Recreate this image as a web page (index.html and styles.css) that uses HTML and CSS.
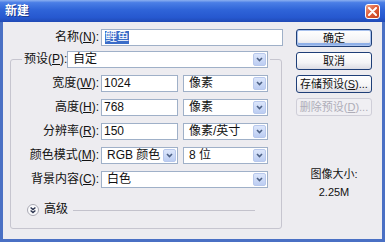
FILE: index.html
```html
<!DOCTYPE html>
<html lang="zh-CN">
<head>
  <meta charset="UTF-8" />
  <title>新建</title>
  <link rel="stylesheet" href="styles.css">
</head>
<body>
  <div class="window">
    <div class="titlebar">
      <span class="title">新建</span>
      <span class="close">
        <svg width="9" height="9" viewBox="0 0 9 9"><path d="M1 1L8 8M8 1L1 8" stroke="#fff" stroke-width="2" stroke-linecap="round"/></svg>
      </span>
    </div>
    <div class="body">
      <div class="main">
        <div class="row name-row">
          <label class="lbl">名称(<u>N</u>):</label>
          <div class="field name-field"><span class="sel">鲤鱼</span></div>
        </div>
        <fieldset class="group">
          <legend class="preset">
            <label class="preset-lbl">预设(<u>P</u>):</label>
            <div class="field select preset-select">自定<span class="arrow"><svg width="7" height="5" viewBox="0 0 7 5"><path d="M1 1L3.5 3.5L6 1" stroke="#4d6185" stroke-width="1.6" fill="none"/></svg></span></div>
          </legend>
          <div class="row">
            <label class="lbl">宽度(<u>W</u>):</label>
            <div class="field num">1024</div>
            <div class="field select unit">像素<span class="arrow"><svg width="7" height="5" viewBox="0 0 7 5"><path d="M1 1L3.5 3.5L6 1" stroke="#4d6185" stroke-width="1.6" fill="none"/></svg></span></div>
          </div>
          <div class="row">
            <label class="lbl">高度(<u>H</u>):</label>
            <div class="field num">768</div>
            <div class="field select unit">像素<span class="arrow"><svg width="7" height="5" viewBox="0 0 7 5"><path d="M1 1L3.5 3.5L6 1" stroke="#4d6185" stroke-width="1.6" fill="none"/></svg></span></div>
          </div>
          <div class="row">
            <label class="lbl">分辨率(<u>R</u>):</label>
            <div class="field num">150</div>
            <div class="field select unit">像素/英寸<span class="arrow"><svg width="7" height="5" viewBox="0 0 7 5"><path d="M1 1L3.5 3.5L6 1" stroke="#4d6185" stroke-width="1.6" fill="none"/></svg></span></div>
          </div>
          <div class="row">
            <label class="lbl">颜色模式(<u>M</u>):</label>
            <div class="field select num">RGB 颜色<span class="arrow"><svg width="7" height="5" viewBox="0 0 7 5"><path d="M1 1L3.5 3.5L6 1" stroke="#4d6185" stroke-width="1.6" fill="none"/></svg></span></div>
            <div class="field select unit">8 位<span class="arrow"><svg width="7" height="5" viewBox="0 0 7 5"><path d="M1 1L3.5 3.5L6 1" stroke="#4d6185" stroke-width="1.6" fill="none"/></svg></span></div>
          </div>
          <div class="row">
            <label class="lbl">背景内容(<u>C</u>):</label>
            <div class="field select full">白色<span class="arrow"><svg width="7" height="5" viewBox="0 0 7 5"><path d="M1 1L3.5 3.5L6 1" stroke="#4d6185" stroke-width="1.6" fill="none"/></svg></span></div>
          </div>
          <div class="advanced">
            <span class="toggle">
              <svg width="12" height="12" viewBox="0 0 12 12">
                <circle cx="6" cy="6" r="5.5" fill="#fafafc" stroke="#a9a9b3"/>
                <path d="M3.6 3.4L6 5.6L8.4 3.4M3.6 6.4L6 8.6L8.4 6.4" stroke="#2d3550" stroke-width="1.3" fill="none"/>
              </svg>
            </span>
            <span class="adv-text">高级</span>
            <span class="adv-line"></span>
          </div>
        </fieldset>
      </div>
      <div class="side">
        <div class="btn default">确定</div>
        <div class="btn">取消</div>
        <div class="btn">存储预设(<u>S</u>)...</div>
        <div class="btn disabled">删除预设(<u>D</u>)...</div>
        <div class="info">
          <div>图像大小:</div>
          <div class="size">2.25M</div>
        </div>
      </div>
    </div>
  </div>
</body>
</html>
```

FILE: styles.css
```css
*, *::before, *::after {
  box-sizing: border-box;
}

body {
  margin: 0;
  font-family: "Liberation Sans", "Noto Sans CJK SC", sans-serif;
  font-size: 12px;
  color: #111;
  background: #fff;
}

u {
  text-decoration: underline;
  text-underline-offset: 1px;
}

.window {
  width: 385px;
  height: 242px;
  display: flex;
  flex-direction: column;
  background: #4168c0;
}

/* Title bar */
.titlebar {
  height: 22px;
  flex: none;
  display: flex;
  align-items: center;
  justify-content: space-between;
  padding: 0 5px 0 5px;
  background: linear-gradient(to bottom, #8cb0f0 0%, #4a7ee6 12%, #2f64d8 45%, #2658cf 80%, #2049b5 100%);
}

.title {
  color: #fff;
  font-weight: bold;
  font-size: 12px;
  line-height: 14px;
  text-shadow: 1px 1px 0 #1b3a90;
}

.close {
  width: 15px;
  height: 15px;
  border: 1px solid #fff;
  border-radius: 3px;
  background: linear-gradient(135deg, #f0a58a 0%, #e0603c 45%, #c5401c 100%);
  display: flex;
  align-items: center;
  justify-content: center;
}

/* Dialog body */
.body {
  flex: 1;
  display: flex;
  background: #edecf0;
  border: 3px solid #4a70c4;
  border-top: 0;
}

.main {
  width: 280px;
  padding-top: 7px;
}

.row {
  display: flex;
  align-items: center;
  height: 17px;
  margin-top: 7px;
}

.name-row {
  margin-top: 0;
}

.lbl {
  width: 88px;
  margin-right: 2px;
  text-align: right;
  line-height: 15px;
  white-space: nowrap;
}

.name-row .lbl {
  width: 96px;
}

.field {
  height: 17px;
  border: 1px solid #9fb0c8;
  background: #fff;
  padding-left: 2px;
  display: flex;
  align-items: center;
  line-height: 15px;
  white-space: nowrap;
}

.field.select {
  padding-left: 5px;
}

.name-field {
  width: 182px;
  padding-left: 3px;
}

.sel {
  background: #3a6cc8;
  color: #fff;
  line-height: 13px;
}

.select .arrow {
  margin-left: auto;
  width: 13px;
  height: 13px;
  margin-right: 1px;
  border: 1px solid #b8c8ec;
  border-radius: 2px;
  background: linear-gradient(to bottom, #dce6fb, #bccdf2);
  display: flex;
  align-items: center;
  justify-content: center;
}

/* Group box */
.group {
  margin: 5px 0 0 7px;
  padding: 0 0 12px 0;
  width: 272px;
  min-width: 0;
  border: 1px solid #c6c5cf;
  border-radius: 3px;
}

.preset {
  display: flex;
  align-items: center;
  height: 17px;
  margin-left: 11px;
  padding: 0 2px;
}

.preset-lbl {
  width: 43px;
  line-height: 15px;
  white-space: nowrap;
}

.preset-select {
  width: 201px;
}

.group .row:first-of-type {
  margin-top: 7px;
}

.num {
  width: 77px;
}

.unit {
  width: 85px;
  margin-left: 5px;
}

.full {
  width: 167px;
}

.advanced {
  display: flex;
  align-items: center;
  height: 13px;
  margin-top: 15px;
  padding-left: 16px;
}

.toggle {
  display: flex;
}

.adv-text {
  margin-left: 5px;
  line-height: 13px;
}

.adv-line {
  flex: 1;
  height: 1px;
  margin: 1px 26px 0 5px;
  background: #c3c2cc;
}

/* Side buttons */
.side {
  flex: 1;
  padding: 7px 0 0 13px;
  display: flex;
  flex-direction: column;
}

.btn {
  width: 76px;
  height: 18px;
  margin-bottom: 5px;
  border: 1px solid #1f3f78;
  border-radius: 3px;
  background: linear-gradient(to bottom, #ffffff 0%, #f4f4f6 60%, #dcdce4 100%);
  display: flex;
  align-items: center;
  justify-content: center;
  font-size: 11px;
  line-height: 14px;
  white-space: nowrap;
}

.btn.default {
  box-shadow: inset 0 0 0 1px #a9c2ee, inset 0 -2px 0 1px #8fb0e8;
}

.btn.disabled {
  border-color: #cfced8;
  background: #f0eff3;
  color: #aeadb8;
}

.info {
  width: 76px;
  margin-top: 46px;
  text-align: center;
  font-size: 11px;
  line-height: 14px;
}

.size {
  margin-top: 4px;
}
```
